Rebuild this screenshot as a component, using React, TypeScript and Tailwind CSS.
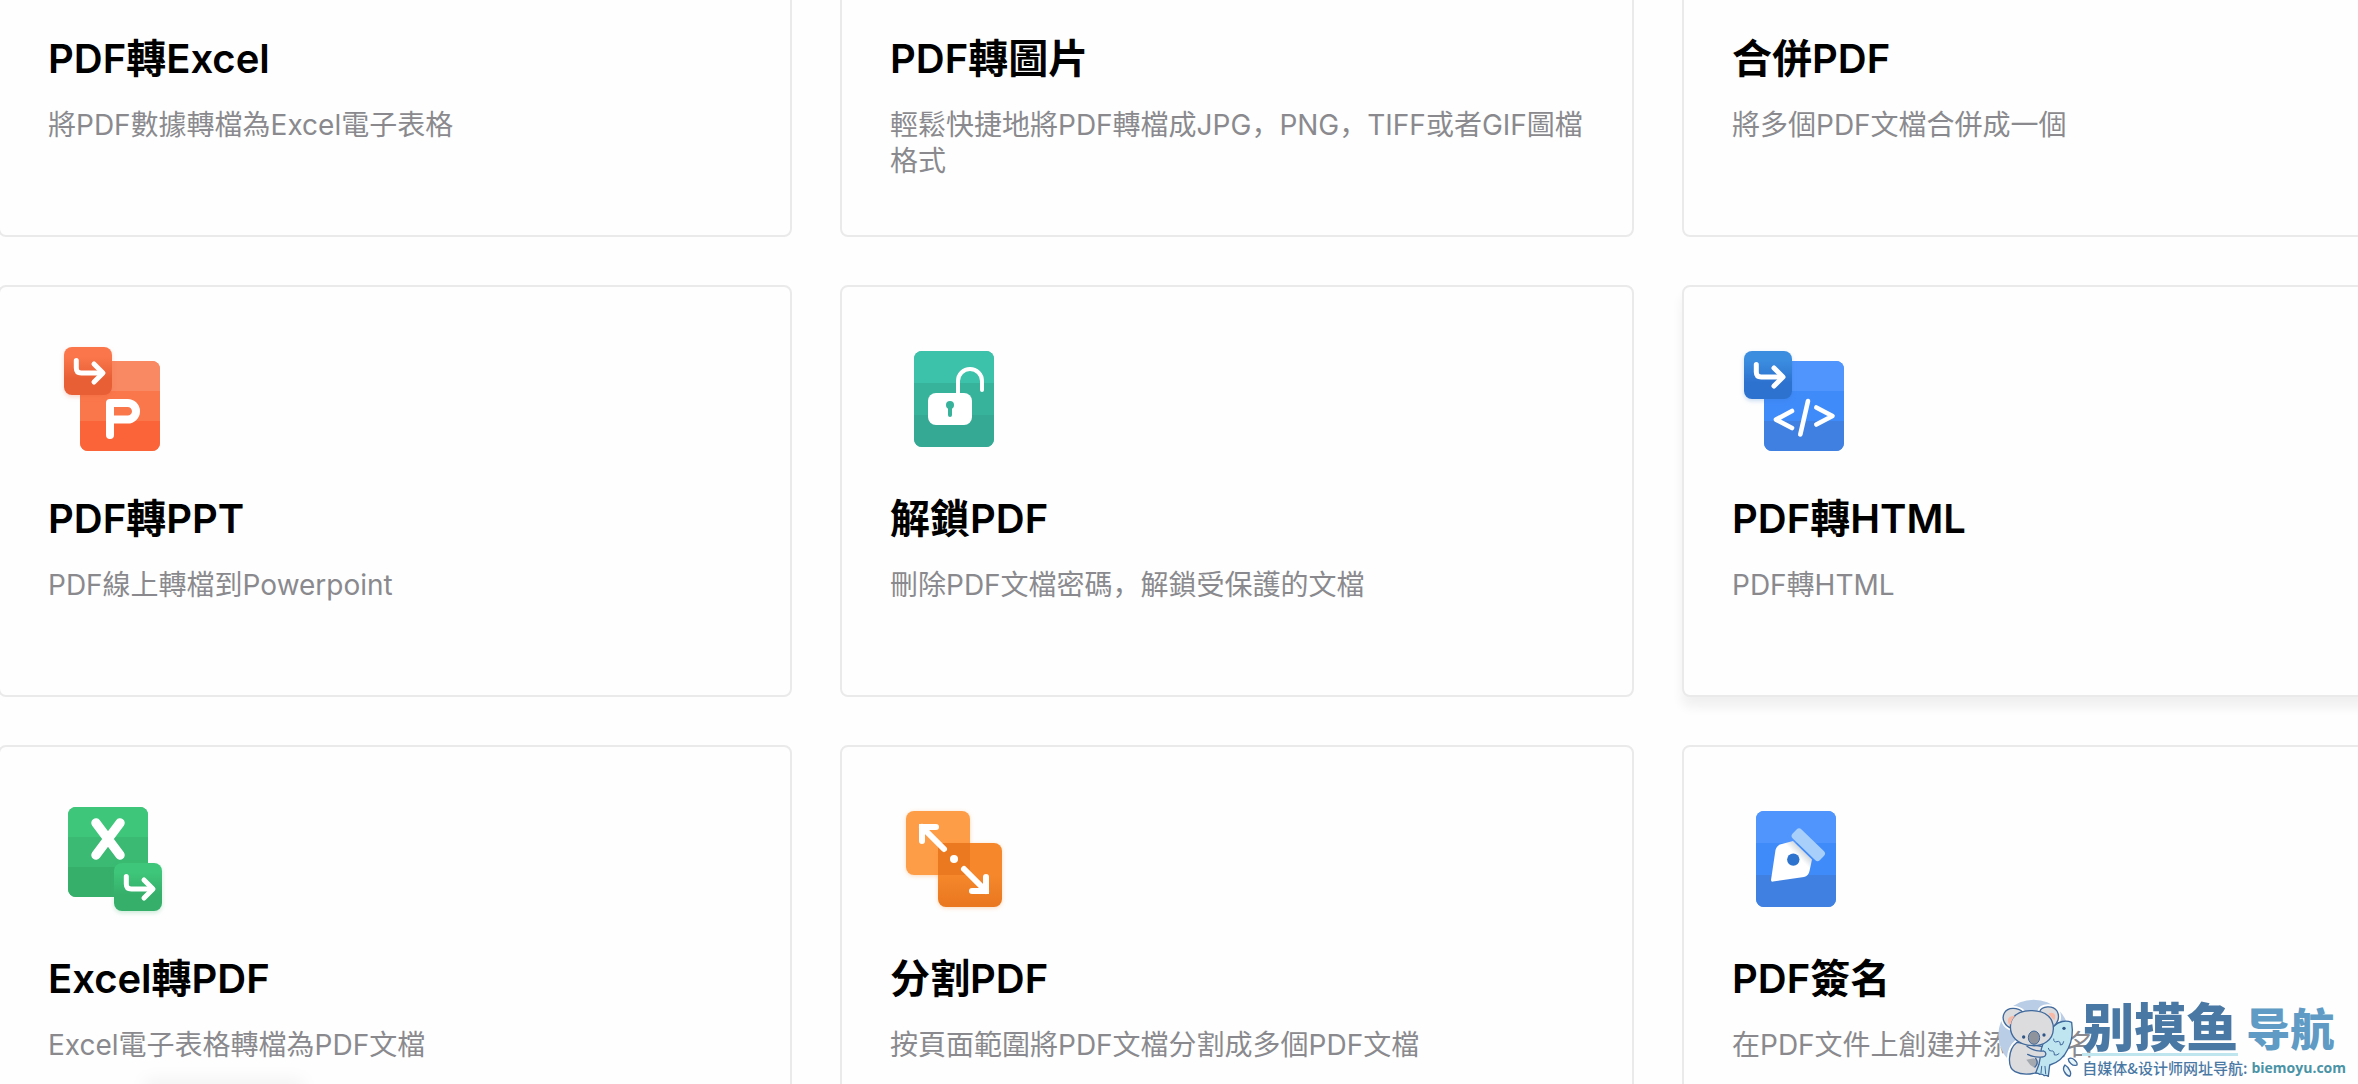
import React from 'react';

interface Tool {
  title: string;
  desc: string;
  icon?: React.ReactNode;
  active?: boolean;
}

interface SheetProps {
  x: number;
  y: number;
  height: number;
  colors: [string, string, string];
}

// Rounded page with three horizontal bands
const Sheet: React.FC<SheetProps> = ({ x, y, height, colors }) => {
  const band = height / 3;

  return (
    <g>
      <rect x={x} y={y} width={80} height={height} rx={8} fill={colors[1]} />
      <path d={`M${x} ${y + band}v${8 - band}a8 8 0 0 1 8-8h64a8 8 0 0 1 8 8v${band - 8}z`} fill={colors[0]} />
      <path d={`M${x} ${y + band * 2}h80v${band - 8}a8 8 0 0 1-8 8h-64a8 8 0 0 1-8-8z`} fill={colors[2]} />
    </g>
  );
};

interface BadgeProps {
  id: string;
  x: number;
  y: number;
  from: string;
  to: string;
}

// Small square with the convert arrow
const ArrowBadge: React.FC<BadgeProps> = ({ id, x, y, from, to }) => (
  <g transform={`translate(${x} ${y})`}>
    <defs>
      <linearGradient id={id} x1="0" y1="0" x2="0" y2="1">
        <stop offset="0.2" stopColor={from} />
        <stop offset="0.65" stopColor={to} />
      </linearGradient>
    </defs>
    <rect width={48} height={48} rx={8} fill={`url(#${id})`} style={{ filter: `drop-shadow(0 2px 2px ${to}40)` }} />
    <g fill="none" stroke="#fff" strokeWidth={5} strokeLinecap="round" strokeLinejoin="round">
      <path d="M12.300 13.500v7.500q0 5 5 5h20" />
      <path d="M30 17l9 9-9 9" />
    </g>
  </g>
);

const Icon: React.FC<{ children: React.ReactNode }> = ({ children }) => (
  <svg viewBox="0 0 128 128" className="block size-32" aria-hidden="true">
    {children}
  </svg>
);

const PptIcon = () => (
  <Icon>
    <Sheet x={32} y={26} height={90} colors={['#f98963', '#fa774b', '#fb6438']} />
    <path d="M62 100V68h17.700a8.300 8.300 0 0 1 0 16.600H64" fill="none" stroke="#fff" strokeWidth={8} strokeLinecap="round" strokeLinejoin="round" />
    <ArrowBadge id="ppt" x={16} y={12} from="#fb774b" to="#e85f36" />
  </Icon>
);

const UnlockIcon = () => (
  <Icon>
    <Sheet x={24} y={16} height={96} colors={['#3cc1aa', '#37b29b', '#35a994']} />
    <rect x={38} y={58} width={44} height={32} rx={8} fill="#fff" />
    <path d="M68 60V46a12 12 0 0 1 24 0v9" fill="none" stroke="#fff" strokeWidth={4} strokeLinecap="round" />
    <circle cx={60} cy={70} r={4} fill="#37b29b" />
    <path d="M60 70v10" stroke="#37b29b" strokeWidth={4} strokeLinecap="round" />
  </Icon>
);

const HtmlIcon = () => (
  <Icon>
    <Sheet x={32} y={26} height={90} colors={['#5095fd', '#408bfa', '#3f80e0']} />
    <g fill="none" stroke="#fff" strokeWidth={4.6} strokeLinecap="round" strokeLinejoin="round">
      <path d="M60 76L44 84.600 60 93" />
      <path d="M84.300 72.500L100.500 81 84.300 89.500" />
      <path d="M76 66L68.300 99.500" />
    </g>
    <ArrowBadge id="html" x={12} y={16} from="#3b8de0" to="#2d72cf" />
  </Icon>
);

const ExcelIcon = () => (
  <Icon>
    <Sheet x={20} y={12} height={90} colors={['#3ec67a', '#3aba72', '#36af6a']} />
    <path d="M48 28L72 60M72 28L48 60" stroke="#fff" strokeWidth={9.5} strokeLinecap="round" />
    <ArrowBadge id="excel" x={66} y={68} from="#3ec67a" to="#36af6a" />
  </Icon>
);

const SplitIcon = () => (
  <Icon>
    <defs>
      <linearGradient id="split" x1="0" y1="0" x2="0" y2="1">
        <stop offset="0.5" stopColor="#f6882b" />
        <stop offset="0.95" stopColor="#ea7820" />
      </linearGradient>
    </defs>
    <rect x={16} y={16} width={64} height={64} rx={8} fill="#fe9d47" className="drop-shadow-[0_1px_2px_#f6882b50]" />
    <rect x={48} y={48} width={64} height={64} rx={8} fill="url(#split)" className="drop-shadow-[0_1px_2px_#f6882b50]" />
    <path d="M48 48h32v24a8 8 0 0 1-8 8H48V56z" fill="#eb7920" />
    <path d="M70 70h10v10H70z" fill="#eb7920" />
    <g fill="none" stroke="#fff" strokeWidth={6} strokeLinecap="round" strokeLinejoin="miter">
      <path d="M32 46V32h14M32 32l22 22" />
      <path d="M96 82v14H82M96 96L74 74" />
    </g>
    <circle cx={64} cy={64} r={4} fill="#fff" />
  </Icon>
);

const SignIcon = () => (
  <Icon>
    <defs>
      <linearGradient id="nib" gradientUnits="userSpaceOnUse" x1="71" y1="55" x2="65" y2="61">
        <stop offset="0" stopColor="#cfd6dc" />
        <stop offset="1" stopColor="#fff" />
      </linearGradient>
    </defs>
    <Sheet x={24} y={16} height={96} colors={['#5095fd', '#408bfa', '#3f80e0']} />
    <path d="M39 85L43.500 55Q44.500 51 48 49.500L61 46 80 64.500 77.500 76Q76.500 81 72 82L41 86.600Q39 87 39 85z" fill="url(#nib)" />
    <circle cx={61.300} cy={64.600} r={6.200} fill="#2e74cf" />
    <rect x={57.300} y={43.400} width={38} height={12.600} rx={3.500} transform="rotate(44 76.300 49.700)" fill="#a7cffa" />
  </Icon>
);

const TOOLS: Tool[] = [
  { title: 'PDF轉Excel', desc: '將PDF數據轉檔為Excel電子表格' },
  { title: 'PDF轉圖片', desc: '輕鬆快捷地將PDF轉檔成JPG，PNG，TIFF或者GIF圖檔格式' },
  { title: '合併PDF', desc: '將多個PDF文檔合併成一個' },
  { title: 'PDF轉PPT', desc: 'PDF線上轉檔到Powerpoint', icon: <PptIcon /> },
  { title: '解鎖PDF', desc: '刪除PDF文檔密碼，解鎖受保護的文檔', icon: <UnlockIcon /> },
  { title: 'PDF轉HTML', desc: 'PDF轉HTML', icon: <HtmlIcon />, active: true },
  { title: 'Excel轉PDF', desc: 'Excel電子表格轉檔為PDF文檔', icon: <ExcelIcon /> },
  { title: '分割PDF', desc: '按頁面範圍將PDF文檔分割成多個PDF文檔', icon: <SplitIcon /> },
  { title: 'PDF簽名', desc: '在PDF文件上創建并添加簽名', icon: <SignIcon /> },
];

const ToolCard: React.FC<{ tool: Tool }> = ({ tool }) => (
  <a
    href="#"
    className={`block rounded-lg border-2 border-[#eaeaea] bg-[#fefefe] px-12 pt-12 pb-14 ${
      tool.active ? 'shadow-[0_10px_12px_rgba(0,0,0,0.06)]' : ''
    }`}
  >
    <div className="h-32">{tool.icon}</div>
    <h3 className="mt-7 text-[40px] leading-14 font-semibold text-black">{tool.title}</h3>
    <p className="mt-5 min-h-18 text-[28px] leading-9 text-[#8a8a8e]">{tool.desc}</p>
  </a>
);

const KOALA_BODY = 'M176 246C148 268 146 322 170 334C190 344 218 342 238 336L262 260z';
const KOALA_LEFT_EAR = 'M160 204C140 198 128 176 138 158C148 140 178 140 194 156z';
const KOALA_RIGHT_EAR = 'M244 154C250 136 284 134 296 152C306 170 298 190 284 200z';
const KOALA_HEAD = 'M158 184C168 158 194 150 222 151C262 152 286 172 285 206C284 240 254 258 222 256C182 254 148 230 158 184z';
const FISH = 'M288 196C300 184 322 178 340 186C344 212 342 240 330 264C318 290 298 308 274 314L270 348Q264 344 258 346Q252 340 244 342Q240 338 232 338L242 312 246 290C246 262 262 226 288 196z';

// Koala hugging a fish
const Koala = () => (
  <svg viewBox="110 110 261 249" className="h-[83px] w-[87px] shrink-0" aria-hidden="true">
    <circle cx={226} cy={224} r={106} fill="#b9cde6" />
    <g fill="#fff" stroke="#fff" strokeWidth={15} strokeLinejoin="round">
      <path d={KOALA_BODY} />
      <path d={KOALA_LEFT_EAR} />
      <path d={KOALA_RIGHT_EAR} />
    </g>
    <g stroke="#40699c" strokeWidth={4} strokeLinejoin="round" strokeLinecap="round">
      <path d={KOALA_BODY} fill="#dcdcde" />
      <path d="M204 298L226 294 240 302 228 322 216 314z" fill="#a4a8af" stroke="none" />
      <path d={FISH} fill="#bfe6f0" />
      <path d={KOALA_LEFT_EAR} fill="#dcdcde" />
      <path d={KOALA_RIGHT_EAR} fill="#dcdcde" />
      <path d={KOALA_HEAD} fill="#dcdcde" />
      <path d="M206 258C222 270 240 274 256 272C266 276 264 290 252 290C236 292 220 288 208 282" fill="#dcdcde" />
      <path d="M232 294C238 302 238 312 230 320" fill="none" />
      <path d="M286 236q0 12 10 8t10 10q8 2 10-10M270 264q2 10 10 8t8 12q8 2 14-4M250 318l-2 20M260 318l2 22" fill="none" strokeWidth={3} />
      <path d="M330 296Q338 290 348 298Q358 306 356 314Q346 318 338 310Q330 304 330 296z" fill="#e4f4f8" />
      <path d="M320 314Q312 324 318 334Q324 346 334 348Q340 340 334 330Q328 318 320 314z" fill="#e4f4f8" />
    </g>
    <path d="M152 192C144 178 150 166 170 166C164 174 158 182 158 192z" fill="#f7b9a6" />
    <path d="M270 160C284 152 296 162 288 180C282 174 276 168 270 160z" fill="#f7b9a6" />
    <ellipse cx={227} cy={232} rx={17} ry={20} fill="#8f949c" stroke="#40699c" strokeWidth={3} />
    <circle cx={196} cy={230} r={5} fill="#2f5587" />
    <circle cx={257} cy={224} r={5} fill="#2f5587" />
    <circle cx={317} cy={204} r={5} fill="#2f5587" />
  </svg>
);

const Watermark = () => (
  <div className="absolute right-3 bottom-1 flex items-end font-['Noto_Sans_CJK_SC',sans-serif] whitespace-nowrap">
    <Koala />
    <div>
      <div className="flex items-center gap-2 font-black">
        <span className="border-b-3 border-[#bfe6ee] text-[52px] leading-14 text-[#4a78a4]">别摸鱼</span>
        <span className="text-[44px] leading-14 text-[#5f9bc4]">导航</span>
      </div>
      <div className="flex items-center text-[15px] leading-6 font-medium text-[#4a78a4]">
        自媒体&amp;设计师网址导航:
        <span className="ml-1 font-['Open_Sans',sans-serif] text-sm leading-6 font-bold text-[#4a93a6]">biemoyu.com</span>
      </div>
    </div>
  </div>
);

const App: React.FC = () => {
  return (
    <div className="relative h-screen overflow-hidden bg-[#fefefe] font-[Inter,'Noto_Sans_CJK_SC',sans-serif]">
      <main className="-mt-[175px] -mr-[118px] -ml-[2px] grid grid-cols-3 gap-12">
        {TOOLS.map(tool => (
          <ToolCard key={tool.title} tool={tool} />
        ))}
      </main>

      <div className="absolute -bottom-3 left-36 h-4 w-40 rounded-full bg-black/5 blur-sm" />
      <Watermark />
    </div>
  );
};

export default App;
